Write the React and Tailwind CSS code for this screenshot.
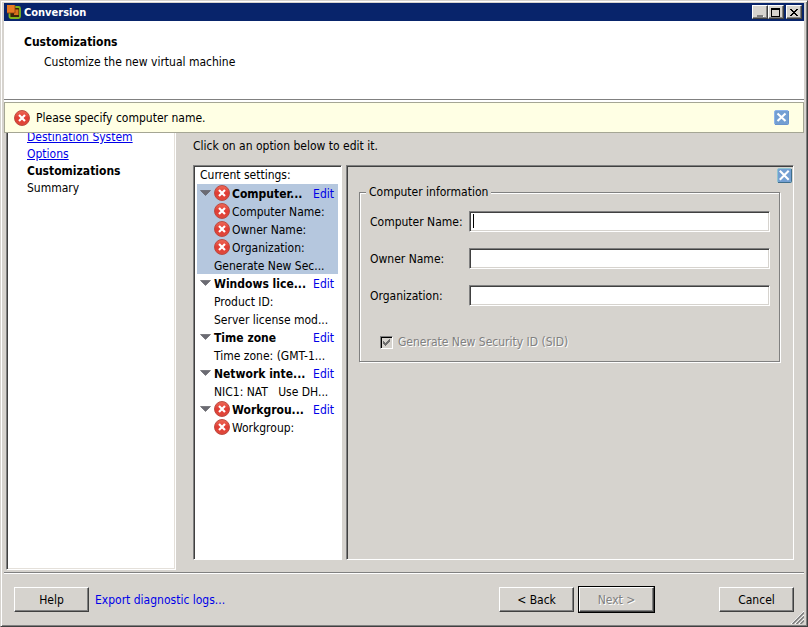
import { useState } from "react";

const settings = [
  {
    title: "Computer...",
    error: true,
    selected: true,
    items: [
      { text: "Computer Name:", error: true },
      { text: "Owner Name:", error: true },
      { text: "Organization:", error: true },
      { text: "Generate New Sec..." },
    ],
  },
  {
    title: "Windows lice...",
    items: [{ text: "Product ID:" }, { text: "Server license mod..." }],
  },
  { title: "Time zone", items: [{ text: "Time zone: (GMT-1..." }] },
  {
    title: "Network inte...",
    items: [{ text: "NIC1: NAT \u00a0 Use DH..." }],
  },
  {
    title: "Workgrou...",
    error: true,
    items: [{ text: "Workgroup:", error: true }],
  },
];

const ErrorIcon = () => (
  <svg viewBox="0 0 16 16" className="h-4 w-4 shrink-0" aria-hidden="true">
    <defs>
      <linearGradient id="red" x1="0" y1="0" x2="0" y2="1">
        <stop offset="0" stopColor="#ee6a58" />
        <stop offset="0.5" stopColor="#e03c34" />
        <stop offset="1" stopColor="#e04a3c" />
      </linearGradient>
    </defs>
    <circle cx="8" cy="8" r="7.5" fill="url(#red)" stroke="#b5453c" strokeWidth="0.9" />
    <path
      d="M5.8 5.8 L10.2 10.2 M10.2 5.8 L5.8 10.2"
      stroke="#fff"
      strokeWidth="2.2"
      strokeLinecap="square"
    />
  </svg>
);

const CloseIcon = ({ dark }) => (
  <svg viewBox="0 0 15 15" className="h-[15px] w-[15px]" aria-hidden="true">
    <rect x="0.5" y="0.5" width="14" height="14" rx="1.5" fill="#739fd2" stroke={dark ? "#8fc4d0" : "#8db4ea"} />
    <path
      d="M1 14.5 H13.5 Q14.5 14.5 14.5 13.5 V1"
      fill="none"
      stroke={dark ? "#3f6f8c" : "#6a94cc"}
    />
    <path
      d={dark ? "M2.8 2.8 L11.7 11.7 M11.7 2.8 L2.8 11.7" : "M3.5 3.5 L11.5 11 M11.5 3.5 L3.5 11"}
      stroke="#fff"
      strokeWidth="2.1"
    />
  </svg>
);

const AppIcon = () => (
  <svg viewBox="0 0 14 14" className="h-[14px] w-[14px]" aria-hidden="true">
    <rect x="2.5" y="2" width="10.5" height="11" rx="1.5" fill="#3a2408" stroke="#7fb51c" strokeWidth="1.8" />
    <rect x="7" y="4.5" width="4.5" height="5.5" fill="#d8711c" />
    <rect x="0" y="0" width="8" height="8" fill="#e67a24" />
    <path d="M0 8 H8 V0" fill="none" stroke="#8c3d0c" strokeWidth="0.8" />
  </svg>
);

const Arrow = () => (
  <svg viewBox="0 0 11 6" className="h-[6px] w-[11px] shrink-0" aria-hidden="true">
    <path d="M0.5 0.5 H10.5 L5.5 5.5 Z" fill="#6b6b73" stroke="#55555c" strokeWidth="0.6" />
  </svg>
);

const TitleButton = ({ label, children }) => (
  <button
    aria-label={label}
    className="flex h-[14px] w-4 items-center justify-center border border-t-white border-l-white border-r-[#404040] border-b-[#404040] bg-[#d6d3ce] shadow-[inset_-1px_-1px_0_#808080]"
  >
    <svg viewBox="0 0 12 11" className="h-[11px] w-3 shrink-0" shapeRendering="crispEdges">
      {children}
    </svg>
  </button>
);

const Button = ({ children, ...props }) => (
  <button
    className="h-[25px] w-[75px] border border-t-white border-l-white border-r-[#404040] border-b-[#404040] bg-[#d6d3ce] pt-0.5 shadow-[inset_-1px_-1px_0_#808080] disabled:text-[#808080] disabled:[text-shadow:1px_1px_0_#fff]"
    {...props}
  >
    {children}
  </button>
);

const TextField = ({ id, label, caret }) => (
  <div className="flex h-[21px] items-center">
    <label htmlFor={id} className="w-[99px] shrink-0 pt-0.5 whitespace-nowrap">
      {label}
    </label>
    <div className="relative grow">
      <input
        id={id}
        type="text"
        className="block h-[21px] w-full border border-t-[#808080] border-l-[#808080] border-r-white border-b-white bg-white px-1 shadow-[inset_1px_1px_0_#404040,inset_-1px_-1px_0_#d6d3ce] outline-none"
      />
      {caret && <span className="absolute top-[3px] left-1 h-[14px] w-px bg-black" />}
    </div>
  </div>
);

const SettingsGroup = ({ group }) => (
  <li className={group.selected ? "bg-[#b5c7de]" : ""}>
    <div className="flex h-[18px] items-center pr-1 pl-[3px]">
      <Arrow />
      <div className="ml-[3px] flex grow items-center gap-0.5 font-bold">
        {group.error && <ErrorIcon />}
        <span className="pt-0.5 whitespace-nowrap">{group.title}</span>
      </div>
      <a href="#edit" className="pt-0.5 text-[#0000e8]">
        Edit
      </a>
    </div>
    {group.items.map((item) => (
      <div key={item.text} className="flex h-[18px] items-center gap-0.5 pl-[17px] whitespace-nowrap">
        {item.error && <ErrorIcon />}
        <span className="pt-0.5">{item.text}</span>
      </div>
    ))}
  </li>
);

const panel =
  "border border-t-[#808080] border-l-[#808080] border-r-white border-b-white shadow-[inset_1px_1px_0_#404040]";

export default function App() {
  const [generateSid] = useState(true);

  return (
    <div className="flex min-h-screen flex-col border-t border-l border-r border-b border-t-[#d6d3ce] border-l-[#d6d3ce] border-r-[#404040] border-b-[#404040] bg-[#d6d3ce] pt-0.5 pr-[3px] pb-0.5 pl-[3px] font-['DejaVu_Sans_Condensed','DejaVu_Sans',sans-serif] text-[12px] leading-[17px] text-black shadow-[inset_1px_1px_0_#fff,inset_-1px_-1px_0_#808080]">
      <div className="flex h-[18px] items-center bg-[#08246b] pr-0.5 pl-[3px]">
        <AppIcon />
        <h1 className="ml-[3px] grow text-[11px] font-bold text-white">Conversion</h1>
        <TitleButton label="Minimize">
          <path d="M3 8h6v2h-6z" fill="#808080" />
          <path d="M4 10h6v-1h-1v1z" fill="#fff" />
        </TitleButton>
        <TitleButton label="Maximize">
          <path d="M1 1 H10 V10 H1 Z M2 3 H9 V9 H2 Z" fill="#000" fillRule="evenodd" />
        </TitleButton>
        <div className="ml-0.5 flex">
          <TitleButton label="Close">
            <path
              d="M2 2h2v1h1v1h2v-1h1v-1h2v1h-1v1h-1v1h-1v1h1v1h1v1h1v1h-2v-1h-1v-1h-2v1h-1v1h-2v-1h1v-1h1v-1h1v-1h-1v-1h-1v-1h-1z"
              fill="#000"
            />
          </TitleButton>
        </div>
      </div>

      <header className="h-[79px] border-b border-[#808080] bg-white px-5 pt-[13px]">
        <h2 className="font-bold">Customizations</h2>
        <p className="mt-[3px] pl-5">Customize the new virtual machine</p>
      </header>

      <div className="relative flex grow flex-col border-t-2 border-white">
        <div
          role="alert"
          className="absolute inset-x-0 top-0 z-10 flex h-[31px] items-center border border-[#a5a694] bg-[#ffffe4] pr-3.5 pl-[9px]"
        >
          <ErrorIcon />
          <span className="ml-1.5 grow pt-0.5">Please specify computer name.</span>
          <button aria-label="Dismiss">
            <CloseIcon />
          </button>
        </div>

        <div className="flex grow pr-2.5 pl-0.5">
          <nav className="mb-0.5 w-[170px] shrink-0 border border-t-[#808080] border-l-[#808080] border-r-white border-b-white bg-white pt-[26px] pl-5 shadow-[inset_1px_1px_0_#404040,inset_-1px_-1px_0_#e4e0da]">
            <ul>
              <li>
                <a href="#destination" className="text-[#0000e8] underline">
                  Destination System
                </a>
              </li>
              <li>
                <a href="#options" className="text-[#0000e8] underline">
                  Options
                </a>
              </li>
              <li className="font-bold">Customizations</li>
              <li>Summary</li>
            </ul>
          </nav>

          <main className="ml-[17px] flex grow flex-col pt-9 pb-3">
            <p>Click on an option below to edit it.</p>
            <div className="mt-2.5 flex grow gap-1">
              <section className={`w-[149px] shrink-0 bg-white pt-px pr-[3px] pl-[3px] ${panel}`}>
                <h3 className="h-[17px] pl-[3px]">Current settings:</h3>
                <ul>
                  {settings.map((group) => (
                    <SettingsGroup key={group.title} group={group} />
                  ))}
                </ul>
              </section>

              <section className={`relative grow pt-[18px] pr-[13px] pl-3 ${panel}`}>
                <button aria-label="Close panel" className="absolute top-0.5 right-px">
                  <CloseIcon dark />
                </button>
                <fieldset className="h-[178px] border border-[#808080] pr-[9px] pl-2.5 shadow-[1px_1px_0_#fff,inset_1px_1px_0_#fff]">
                  <legend className="-ml-1 bg-[#d6d3ce] px-[3px]">Computer information</legend>
                  <div className="flex flex-col gap-4 pt-2.5">
                    <TextField id="computer-name" label="Computer Name:" caret />
                    <TextField id="owner-name" label="Owner Name:" />
                    <TextField id="organization" label="Organization:" />
                  </div>
                  <div className="mt-7 flex items-center gap-[5px] pl-2.5">
                    <span className="relative flex">
                      <input
                        id="generate-sid"
                        type="checkbox"
                        checked={generateSid}
                        disabled
                        readOnly
                        className="h-[13px] w-[13px] appearance-none border border-t-[#808080] border-l-[#808080] border-r-white border-b-white bg-[#d6d3ce] shadow-[inset_1px_1px_0_#000]"
                      />
                      <svg
                        viewBox="0 0 13 13"
                        className="pointer-events-none absolute inset-0 h-[13px] w-[13px]"
                        shapeRendering="crispEdges"
                      >
                        <path
                          d="M3 5h1v1h1v1h1v-1h1v-1h1v-1h1v-1h1v3h-1v1h-1v1h-1v1h-1v1h-1v-1h-1v-1h-1z"
                          fill="#6e6e6e"
                        />
                      </svg>
                    </span>
                    <label
                      htmlFor="generate-sid"
                      className="text-[#808080] [text-shadow:1px_1px_0_#fff]"
                    >
                      Generate New Security ID (SID)
                    </label>
                  </div>
                </fieldset>
              </section>
            </div>
          </main>
        </div>

        <footer className="relative flex h-[52px] items-center border-t border-[#808080] px-2.5 pt-0.5 shadow-[inset_0_1px_0_#fff]">
          <Button>Help</Button>
          <a href="#logs" className="ml-1.5 grow pt-0.5 text-[#0000e8]">
            Export diagnostic logs...
          </a>
          <Button>&lt; Back</Button>
          <div className="ml-1 flex border border-black">
            <Button disabled>Next &gt;</Button>
          </div>
          <div className="ml-16 flex">
            <Button>Cancel</Button>
          </div>
          <svg
            viewBox="0 0 13 13"
            className="absolute right-0 bottom-0 h-[13px] w-[13px]"
            aria-hidden="true"
          >
            <path d="M0 13 L13 0 M4 13 L13 4 M8 13 L13 8" stroke="#fff" strokeWidth="1" />
            <path d="M1.5 13 L13 1.5 M5.5 13 L13 5.5 M9.5 13 L13 9.5" stroke="#808080" strokeWidth="1.6" />
          </svg>
        </footer>
      </div>
    </div>
  );
}
